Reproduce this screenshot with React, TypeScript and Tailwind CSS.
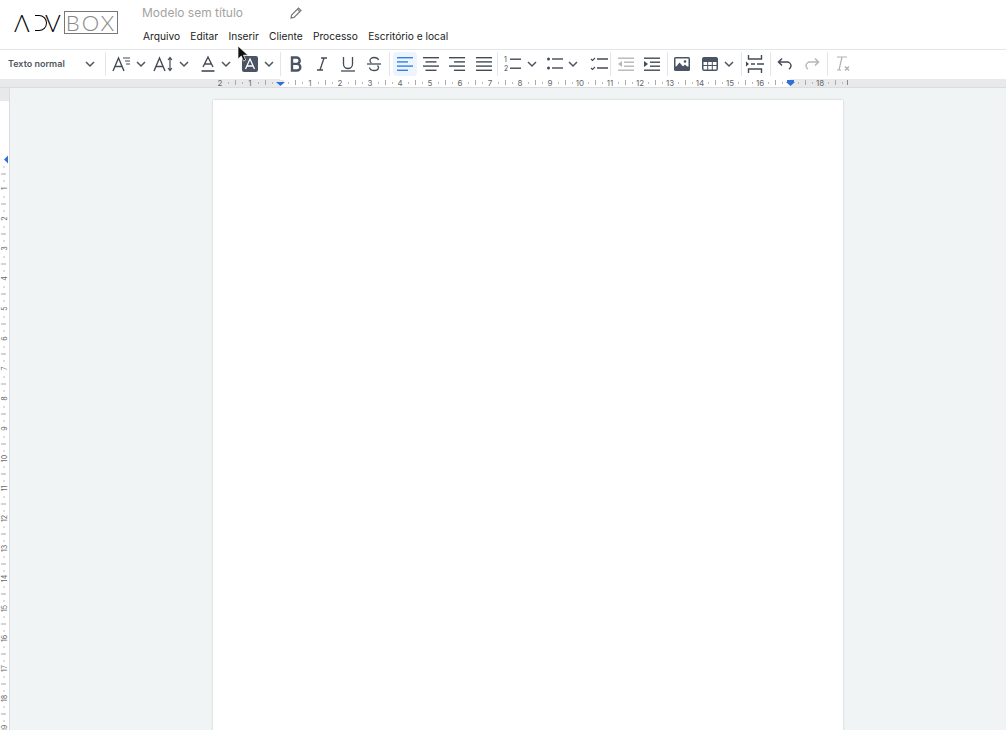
import React from 'react';

const iconColor = '#444b55';

function Chevron() {
  return (
    <svg width="12" height="12" viewBox="0 0 12 12" fill="none" stroke="#4b5563" strokeWidth="1.5">
      <path d="M2 4l4 4 4-4" />
    </svg>
  );
}

function Tool({ className = '', children }: { className?: string; children: React.ReactNode }) {
  return <div className={`flex h-6 w-6 shrink-0 items-center justify-center ${className}`}>{children}</div>;
}

function Caret({ className = '' }: { className?: string }) {
  return (
    <div className={`flex h-6 w-3 shrink-0 items-center justify-center ${className}`}>
      <Chevron />
    </div>
  );
}

function Sep({ className = '' }: { className?: string }) {
  return <div className={`h-[24px] w-px shrink-0 bg-[#e3e5e8] ${className}`} />;
}

function Lines({ rows, color = iconColor }: { rows: [number, number][]; color?: string }) {
  return (
    <svg width="18" height="18" viewBox="0 0 18 18" fill={color}>
      {rows.map(([x, w], i) => (
        <rect key={i} x={x} y={2 + i * 4.2} width={w} height="1.4" />
      ))}
    </svg>
  );
}

function HorizontalRuler() {
  const labels = [2, 1, 0, 1, 2, 3, 4, 5, 6, 7, 8, 9, 10, 11, 12, 13, 14, 15, 16, 17, 18];
  return (
    <svg className="absolute -top-px left-0 opacity-[0.99]" width="1006" height="12" viewBox="0 0 1006 12">
      {labels.map((n, i) => {
        const x = 220 + i * 30;
        return (
          <g key={i}>
            {n !== 0 && n !== 17 && (
              <text x={x} y="7.5" fontSize="8" fill="#666" textAnchor="middle" fontFamily="Inter, sans-serif">
                {n}
              </text>
            )}
            <rect x={x + 8} y="4" width="1" height="2" fill="#bbb" />
            <rect x={x + 15} y="2" width="1" height="5" fill="#aaa" />
            <rect x={x + 22} y="4" width="1" height="2" fill="#bbb" />
          </g>
        );
      })}
      <rect x="847" y="2" width="1" height="5" fill="#888" />
      <path d="M276 4h9l-4.500 4z" fill="#2f6fd6" />
      <path d="M786 4h9l-4.500 4z" fill="#2f6fd6" />
      <rect x="787" y="2" width="7" height="2" fill="#2f6fd6" />
      <rect x="276" y="2" width="8" height="2" fill="#e5e7eb" />
    </svg>
  );
}

function VerticalRuler() {
  const labels = Array.from({ length: 19 }, (_, i) => i + 1);
  return (
    <svg className="absolute left-0 top-0 opacity-[0.99]" width="9" height="643" viewBox="0 0 9 643">
      <path d="M8 67.500l-4 4 4 4z" fill="#2f6fd6" />
      {labels.map((n) => {
        const y = 71 + n * 30 - 0.5;
        return (
          <g key={n}>
            <text
              x="0"
              y="0"
              fontSize="7"
              fill="#666"
              textAnchor="middle"
              fontFamily="Inter, sans-serif"
              transform={`translate(6.800 ${y}) rotate(-90)`}
            >
              {n}
            </text>
            <rect x="3" y={y - 8} width="2" height="1" fill="#bbb" />
            <rect x="1" y={y - 15} width="5" height="1" fill="#aaa" />
            <rect x="3" y={y - 22} width="2" height="1" fill="#bbb" />
          </g>
        );
      })}
    </svg>
  );
}

export default function App() {
  return (
    <div className="relative flex h-[730px] w-[1006px] flex-col overflow-hidden bg-white font-['Inter',sans-serif]">
      <header className="flex h-[50px] shrink-0 border-b border-[#e3e5e8]">
        <div className="ml-[14px] mt-[11px] flex h-[23px] w-[128px] shrink-0 items-center">
          <span className="w-[21px] font-['Lato',sans-serif] text-[24px] font-light leading-none text-black">Λ</span>
          <span className="h-[16px] w-[12px] rounded-r-[8px] border border-l-0 border-black" />
          <span className="-ml-[2px] w-[19px] font-['Lato',sans-serif] text-[24px] font-light leading-none text-black">V</span>
          <span className="flex h-[23px] w-[54px] items-center justify-center border border-[#777] font-['Lato',sans-serif] text-[22px] font-light leading-none tracking-[2px] text-[#888]">
            BOX
          </span>
        </div>
        <div className="flex flex-col">
          <div className="mt-[5px] flex h-[16px] items-center">
            <span className="w-[147px] text-[12px] leading-none text-[#a3a3a3]">Modelo sem título</span>
            <svg width="14" height="14" viewBox="0 0 14 14" fill="none" stroke="#777" strokeWidth="1.200">
              <path d="M2 12l.6-3L9.500 2l2.500 2.500L5 11.400z" />
              <path d="M8.300 3.200l2.500 2.500" />
            </svg>
          </div>
          <nav className="ml-px mt-[7px] flex gap-[10.3px] text-[10.2px] leading-[16px] text-[#222]">
            <span>Arquivo</span>
            <span>Editar</span>
            <span>Inserir</span>
            <span>Cliente</span>
            <span>Processo</span>
            <span>Escritório e local</span>
          </nav>
        </div>
      </header>

      <div className="flex h-[29px] shrink-0 items-center pb-px">
        <span className="ml-[8px] w-[76px] shrink-0 text-[9px] font-semibold text-[#52575f]">Texto normal</span>
        <Caret />
        <Sep className="ml-[9px]" />

        <Tool className="ml-[4px]">
          <svg width="20" height="18" viewBox="0 0 20 18" fill="none" stroke={iconColor} strokeWidth="1.400">
            <path d="M1 16L6.500 3 12 16M3 11.500h7" />
            <path d="M11 3h7M13 6h5M14 9h4" strokeWidth="1.100" />
          </svg>
        </Tool>
        <Caret className="ml-px" />
        <Tool className="ml-[5px]">
          <svg width="22" height="18" viewBox="0 0 22 18" fill="none" stroke={iconColor} strokeWidth="1.400">
            <path d="M1 16L6.500 3 12 16M3 11.500h7" />
            <path d="M17 3v12M15 5l2-2.500L19 5M15 13l2 2.500 2-2.500" strokeWidth="1.200" />
          </svg>
        </Tool>
        <Caret className="ml-[2px]" />
        <Tool className="ml-[6px]">
          <svg width="16" height="18" viewBox="0 0 16 18" fill="none" stroke={iconColor} strokeWidth="1.400">
            <path d="M3 12L8 2l5 10M4.500 9h7" />
            <path d="M1.500 16h13" strokeWidth="1.600" />
          </svg>
        </Tool>
        <Caret />
        <Tool className="ml-[6px]">
          <svg width="16" height="16" viewBox="0 0 16 16">
            <rect width="16" height="16" rx="2" fill="#4a5464" />
            <path d="M3.500 13L8 3l4.500 10M5 10h6" fill="none" stroke="#fff" strokeWidth="1.300" />
          </svg>
        </Tool>
        <Caret className="ml-px" />
        <Sep className="ml-[5px]" />

        <Tool className="ml-[3px]">
          <svg width="14" height="16" viewBox="0 0 14 16" fill="none" stroke="#4a5464" strokeWidth="2.400">
            <path d="M3 1.500v13h5a3.300 3.300 0 000-6.600H3h4.500a3.200 3.200 0 000-6.400z" />
          </svg>
        </Tool>
        <Tool className="ml-[2px]">
          <svg width="12" height="14" viewBox="0 0 12 14" fill="none" stroke={iconColor} strokeWidth="1.300">
            <path d="M5 1h6M1 13h6M8 1L4 13" />
          </svg>
        </Tool>
        <Tool className="ml-[2px]">
          <svg width="14" height="16" viewBox="0 0 14 16" fill="none" stroke={iconColor} strokeWidth="1.300">
            <path d="M2.500 1v7a4.500 4.500 0 009 0V1" />
            <path d="M0 15h14" />
          </svg>
        </Tool>
        <Tool className="ml-[2px]">
          <svg width="14" height="16" viewBox="0 0 14 16" fill="none" stroke={iconColor} strokeWidth="1.300">
            <path d="M11.500 4C11 2 9 1.500 7 1.500 4.500 1.500 3 3 3 4.500c0 1 .5 2 1.500 2.500M10.500 9.500c.7.7 1 1.300 1 2 0 1.800-2 3-4.500 3-2.300 0-4.200-1-4.500-3" />
            <path d="M0 8h14" />
          </svg>
        </Tool>
        <Sep className="ml-[3px]" />

        <Tool className="ml-[3px] rounded-sm bg-[#edf4fc]">
          <Lines color="#2f80ed" rows={[[1, 16], [1, 11], [1, 16], [1, 11]]} />
        </Tool>
        <Tool className="ml-[2px]">
          <Lines rows={[[1, 16], [3.500, 11], [1, 16], [3.500, 11]]} />
        </Tool>
        <Tool className="ml-[2px]">
          <Lines rows={[[1, 16], [6, 11], [1, 16], [6, 11]]} />
        </Tool>
        <Tool className="ml-[3px]">
          <Lines rows={[[1, 16], [1, 16], [1, 16], [1, 16]]} />
        </Tool>
        <Sep className="ml-px" />

        <Tool className="ml-[3px]">
          <svg width="18" height="18" viewBox="0 0 18 18" fill={iconColor}>
            <text x="0" y="7" fontSize="7" fontFamily="Inter, sans-serif">1</text>
            <text x="0" y="16" fontSize="7" fontFamily="Inter, sans-serif">2</text>
            <rect x="6" y="3.500" width="11" height="1.400" />
            <rect x="6" y="12.500" width="11" height="1.400" />
          </svg>
        </Tool>
        <Caret className="ml-px" />
        <Tool className="ml-[5px]">
          <svg width="18" height="18" viewBox="0 0 18 18" fill={iconColor}>
            <circle cx="2.500" cy="4" r="1.500" />
            <circle cx="2.500" cy="13" r="1.500" />
            <rect x="6" y="3.300" width="11" height="1.400" />
            <rect x="6" y="12.300" width="11" height="1.400" />
          </svg>
        </Tool>
        <Caret />
        <Tool className="ml-[8px]">
          <svg width="18" height="18" viewBox="0 0 18 18" fill="none" stroke={iconColor} strokeWidth="1.400">
            <path d="M1 4l1.500 1.500L5 3M1 13l1.500 1.500L5 12" strokeWidth="1.100" />
            <path d="M7 4h11M7 13h11" />
          </svg>
        </Tool>
        <Sep className="-ml-px" />

        <Tool className="ml-[3px]">
          <svg width="18" height="16" viewBox="0 0 18 16" fill="#b4b7bb">
            <rect x="1" y="1.500" width="16" height="1.400" />
            <rect x="7" y="5.500" width="10" height="1.400" />
            <rect x="7" y="9.500" width="10" height="1.400" />
            <rect x="1" y="13.500" width="16" height="1.400" />
            <path d="M5 5v6L1 8z" />
          </svg>
        </Tool>
        <Tool className="ml-[2px]">
          <svg width="18" height="16" viewBox="0 0 18 16" fill={iconColor}>
            <rect x="1" y="1.500" width="16" height="1.400" />
            <rect x="7" y="5.500" width="10" height="1.400" />
            <rect x="7" y="9.500" width="10" height="1.400" />
            <rect x="1" y="13.500" width="16" height="1.400" />
            <path d="M1 5v6l4-3z" />
          </svg>
        </Tool>
        <Sep className="ml-[3px]" />

        <Tool className="ml-[2px]">
          <svg width="16" height="14" viewBox="0 0 16 14">
            <rect width="16" height="14" rx="1.500" fill="#4a5464" />
            <rect x="1.500" y="1.500" width="13" height="8" fill="#fff" />
            <path d="M1.500 10.500l4-5 3.500 4 2-2 3.500 3.500v1h-13z" fill="#4a5464" />
            <circle cx="11" cy="4.500" r="1.300" fill="#4a5464" />
          </svg>
        </Tool>
        <Tool className="ml-[4px]">
          <svg width="16" height="14" viewBox="0 0 16 14" fill="none" stroke="#4a5464">
            <rect x=".75" y=".75" width="14.500" height="12.500" rx="1.500" strokeWidth="1.500" />
            <path d="M1 1h14v3.500H1z" fill="#4a5464" />
            <path d="M1 8.500h14M5.700 4v9M10.300 4v9" strokeWidth="1" />
          </svg>
        </Tool>
        <Caret className="ml-px" />
        <Sep className="ml-[6px]" />

        <Tool className="ml-px">
          <svg width="20" height="20" viewBox="0 0 20 20" fill="none" stroke={iconColor} strokeWidth="1.400">
            <path d="M3.500 1v4h13V1M3.500 19v-4h13v4" />
            <path d="M6 10h4M12 10h7" />
            <path d="M1 7.500v5l3-2.500z" fill={iconColor} stroke="none" />
          </svg>
        </Tool>
        <Sep className="ml-[3px]" />

        <Tool className="ml-[2px]">
          <svg width="16" height="14" viewBox="0 0 16 14" fill="none" stroke={iconColor} strokeWidth="1.500">
            <path d="M5 1.500L1.500 5 5 8.500M1.500 5H10a4 4 0 014 4v0a4 4 0 01-2 3" />
          </svg>
        </Tool>
        <Tool className="ml-[3px]">
          <svg width="16" height="14" viewBox="0 0 16 14" fill="none" stroke="#b4b7bb" strokeWidth="1.500">
            <path d="M11 1.500L14.500 5 11 8.500M14.500 5H6a4 4 0 00-4 4v0a4 4 0 002 3" />
          </svg>
        </Tool>
        <Sep className="ml-[3px]" />

        <Tool className="ml-[3px]">
          <svg width="16" height="16" viewBox="0 0 16 16" fill="none" stroke="#aeb1b5" strokeWidth="1.200">
            <path d="M2 1h10M7 1L4 14M2 14h4" />
            <path d="M10 10.500l4 4M14 10.500l-4 4" strokeWidth="1.400" />
          </svg>
        </Tool>
      </div>

      <div className="relative flex h-[9px] shrink-0 border-b border-[#dadce0]">
        <div className="w-[280px] bg-[#e8e9ea]" />
        <div className="w-[510px] bg-white" />
        <div className="flex-1 bg-[#e8e9ea]" />
        <HorizontalRuler />
      </div>

      <div className="flex min-h-0 flex-1">
        <div className="relative w-[10px] shrink-0 border-r border-[#dadce0] bg-white">
          <div className="h-[13px] bg-[#e8e9ea]" />
          <VerticalRuler />
        </div>
        <div className="flex-1 bg-[#f0f4f5] pl-[203px] pt-[12px]">
          <div className="h-[900px] w-[630px] bg-white shadow-[0_0_2px_rgba(0,0,0,0.2)]" />
        </div>
      </div>

      <svg className="absolute left-[237px] top-[45px]" width="12" height="18" viewBox="0 0 12 18">
        <path d="M1 1v13l3.300-3 2.200 5 2.200-1-2.200-4.800H11z" fill="#111" stroke="#fff" strokeWidth="0.700" />
      </svg>
    </div>
  );
}
